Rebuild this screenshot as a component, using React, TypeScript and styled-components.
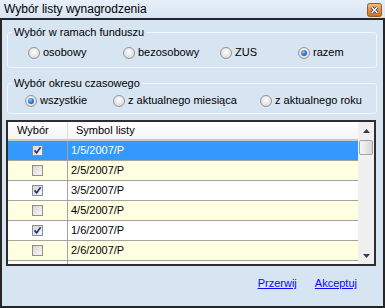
import React from "react";
import styled, { createGlobalStyle } from "styled-components";

const Global = createGlobalStyle`
  html, body { margin: 0; padding: 0; }
  body {
    font-family: "Liberation Sans", Arial, sans-serif;
    font-size: 11px;
    color: #000;
    background: #d7e4f2;
  }
`;

const Window = styled.div`
  width: 385px;
  height: 308px;
  display: flex;
  flex-direction: column;
  overflow: hidden;
`;

const TitleBar = styled.div`
  height: 18px;
  flex: none;
  display: flex;
  align-items: center;
  justify-content: space-between;
  padding: 0 3px 0 4px;
  background: linear-gradient(#e7eff9, #d8e4f2);
  font-size: 12px;
  line-height: 14px;
`;

const CloseBox = styled.div`
  width: 15px;
  height: 14px;
  display: flex;
  margin-top: 1px;
`;

const Body = styled.div`
  flex: 1;
  display: flex;
  flex-direction: column;
  border: 2px solid #262626;
  background: #d7e4f2;
  min-height: 0;
`;

const Group = styled.fieldset<{ $mt: number; $pt: number; $pb: number }>`
  margin: ${(p) => p.$mt}px 6px 0 5px;
  padding: ${(p) => p.$pt}px 0 ${(p) => p.$pb}px 4px;
  border: 1px solid #f3f7fc;
  border-radius: 3px;
  min-width: 0;
  flex: none;
`;

const Legend = styled.legend`
  padding: 0 2px;
  line-height: 13px;
  font-size: 11px;
`;

const RadioRow = styled.div<{ $cols: string; $indent: number }>`
  display: grid;
  grid-template-columns: ${(p) => p.$cols};
  margin-left: ${(p) => p.$indent}px;
  height: 13px;
  align-items: center;
`;

const RadioItem = styled.label`
  display: inline-flex;
  align-items: center;
  gap: 3px;
  line-height: 13px;
  white-space: nowrap;
`;

const RadioDot = styled.span<{ $checked: boolean }>`
  width: 12px;
  height: 12px;
  box-sizing: border-box;
  border-radius: 50%;
  border: 1px solid #959595;
  background: radial-gradient(circle at 50% 40%, #fdfdfd 0%, #e6e6e6 55%, #cfcfcf 100%);
  display: inline-flex;
  align-items: center;
  justify-content: center;
  flex: none;
  &::after {
    content: "";
    display: ${(p) => (p.$checked ? "block" : "none")};
    width: 6px;
    height: 6px;
    border-radius: 50%;
    background: radial-gradient(circle at 40% 35%, #8fd0ff 0%, #2f7fe0 45%, #143c8c 100%);
  }
`;

const Grid = styled.div`
  margin: 6px 7px 0 4px;
  height: 146px;
  box-sizing: border-box;
  border: 2px solid #2e2e2e;
  background: #fff;
  display: flex;
  overflow: hidden;
  flex: none;
`;

const GridMain = styled.div`
  flex: 1;
  display: flex;
  flex-direction: column;
  overflow: hidden;
  min-width: 0;
`;

const Header = styled.div`
  height: 19px;
  flex: none;
  box-sizing: border-box;
  display: grid;
  grid-template-columns: 60px 1fr;
  background: linear-gradient(#ffffff, #f4f4f4);
  border-bottom: 2px solid #c8c8c8;
`;

const HeaderCell = styled.div<{ $pad: number; $divider?: boolean }>`
  display: flex;
  align-items: center;
  padding-left: ${(p) => p.$pad}px;
  border-right: ${(p) => (p.$divider ? "1px solid #dedede" : "none")};
  line-height: 13px;
`;

const Row = styled.div<{ $bg: string; $fg: string }>`
  height: 20px;
  flex: none;
  box-sizing: border-box;
  display: grid;
  grid-template-columns: 60px 1fr;
  background: ${(p) => p.$bg};
  color: ${(p) => p.$fg};
  border-bottom: 1px solid #a3a3a3;
`;

const CheckCell = styled.div`
  display: flex;
  align-items: center;
  justify-content: center;
  border-right: 1px solid #a3a3a3;
  padding-right: 1px;
`;

const TextCell = styled.div`
  display: flex;
  align-items: center;
  padding-left: 3px;
  line-height: 13px;
`;

const CheckBox = styled.span`
  width: 11px;
  height: 11px;
  box-sizing: border-box;
  border: 1px solid #8e8e8e;
  background: linear-gradient(135deg, #d6d6d6, #f8f8f8);
  display: inline-flex;
  align-items: center;
  justify-content: center;
`;

const ScrollBar = styled.div`
  width: 16px;
  flex: none;
  display: flex;
  flex-direction: column;
  background: #f0f0f0;
`;

const ArrowBox = styled.div`
  height: 17px;
  flex: none;
  display: flex;
  align-items: center;
  justify-content: center;
`;

const Thumb = styled.div`
  height: 15px;
  margin: 1px 1px 0 1px;
  box-sizing: border-box;
  border: 1px solid #a4a4a4;
  border-radius: 2px;
  background: linear-gradient(90deg, #f6f6f6, #e4e4e4 60%, #d6d6d6);
  flex: none;
`;

const Track = styled.div`
  flex: 1;
`;

const Footer = styled.div`
  flex: 1;
  display: flex;
  justify-content: flex-end;
  align-items: flex-start;
  gap: 18px;
  padding: 11px 26px 0 0;
`;

const LinkButton = styled.a`
  color: #0a0aff;
  text-decoration: underline;
  line-height: 13px;
  cursor: pointer;
`;

const rows = [
  { sym: "1/5/2007/P", checked: true },
  { sym: "2/5/2007/P", checked: false },
  { sym: "3/5/2007/P", checked: true },
  { sym: "4/5/2007/P", checked: false },
  { sym: "1/6/2007/P", checked: true },
  { sym: "2/6/2007/P", checked: false },
  { sym: "", checked: false },
];

const Radio = ({ label, checked }: { label: string; checked?: boolean }) => (
  <RadioItem>
    <RadioDot $checked={!!checked} />
    <span>{label}</span>
  </RadioItem>
);

const Tick = () => (
  <svg width="9" height="9" viewBox="0 0 9 9">
    <path d="M1.6 4.4 L3.6 6.9 L7.6 1.3" fill="none" stroke="#1f3590" strokeWidth="1.7" />
  </svg>
);

const CloseIcon = () => (
  <svg width="15" height="14" viewBox="0 0 15 14">
    <defs>
      <linearGradient id="cg" x1="0" y1="0" x2="0" y2="1">
        <stop offset="0" stopColor="#f5c089" />
        <stop offset="0.5" stopColor="#e3913f" />
        <stop offset="1" stopColor="#c76c22" />
      </linearGradient>
    </defs>
    <rect x="0.5" y="0.5" width="14" height="13" rx="2" fill="url(#cg)" stroke="#9a5a24" />
    <path d="M4.8 4.2 L10.2 9.8 M10.2 4.2 L4.8 9.8" stroke="#2c3d7e" strokeWidth="3" />
    <path d="M4.8 4.2 L10.2 9.8 M10.2 4.2 L4.8 9.8" stroke="#ffffff" strokeWidth="1.4" />
  </svg>
);

const Up = () => (
  <svg width="7" height="4" viewBox="0 0 7 4">
    <path d="M0 4 L3.5 0 L7 4 Z" fill="#3a3a4a" />
  </svg>
);

const Down = () => (
  <svg width="7" height="4" viewBox="0 0 7 4">
    <path d="M0 0 L3.5 4 L7 0 Z" fill="#3a3a4a" />
  </svg>
);

export default function App() {
  return (
    <>
      <Global />
      <Window>
        <TitleBar>
          <span>Wybór listy wynagrodzenia</span>
          <CloseBox>
            <CloseIcon />
          </CloseBox>
        </TitleBar>
        <Body>
          <Group $mt={6} $pt={7} $pb={8}>
            <Legend>Wybór w ramach funduszu</Legend>
            <RadioRow $cols="95px 97px 78px auto" $indent={16}>
              <Radio label="osobowy" />
              <Radio label="bezosobowy" />
              <Radio label="ZUS" />
              <Radio label="razem" checked />
            </RadioRow>
          </Group>
          <Group $mt={9} $pt={4} $pb={6}>
            <Legend>Wybór okresu czasowego</Legend>
            <RadioRow $cols="88px 147px auto" $indent={13}>
              <Radio label="wszystkie" checked />
              <Radio label="z aktualnego miesiąca" />
              <Radio label="z aktualnego roku" />
            </RadioRow>
          </Group>
          <Grid>
            <GridMain>
              <Header>
                <HeaderCell $pad={9} $divider>Wybór</HeaderCell>
                <HeaderCell $pad={8}>Symbol listy</HeaderCell>
              </Header>
              {rows.map((r, i) => {
                const selected = i === 0;
                const bg = selected ? "#3399ff" : i % 2 === 1 ? "#ffffe1" : "#ffffff";
                return (
                  <Row key={i} $bg={bg} $fg={selected ? "#ffffff" : "#000000"}>
                    <CheckCell>
                      {r.sym && <CheckBox>{r.checked && <Tick />}</CheckBox>}
                    </CheckCell>
                    <TextCell>{r.sym}</TextCell>
                  </Row>
                );
              })}
            </GridMain>
            <ScrollBar>
              <ArrowBox>
                <Up />
              </ArrowBox>
              <Thumb />
              <Track />
              <ArrowBox>
                <Down />
              </ArrowBox>
            </ScrollBar>
          </Grid>
          <Footer>
            <LinkButton>Przerwij</LinkButton>
            <LinkButton>Akceptuj</LinkButton>
          </Footer>
        </Body>
      </Window>
    </>
  );
}
